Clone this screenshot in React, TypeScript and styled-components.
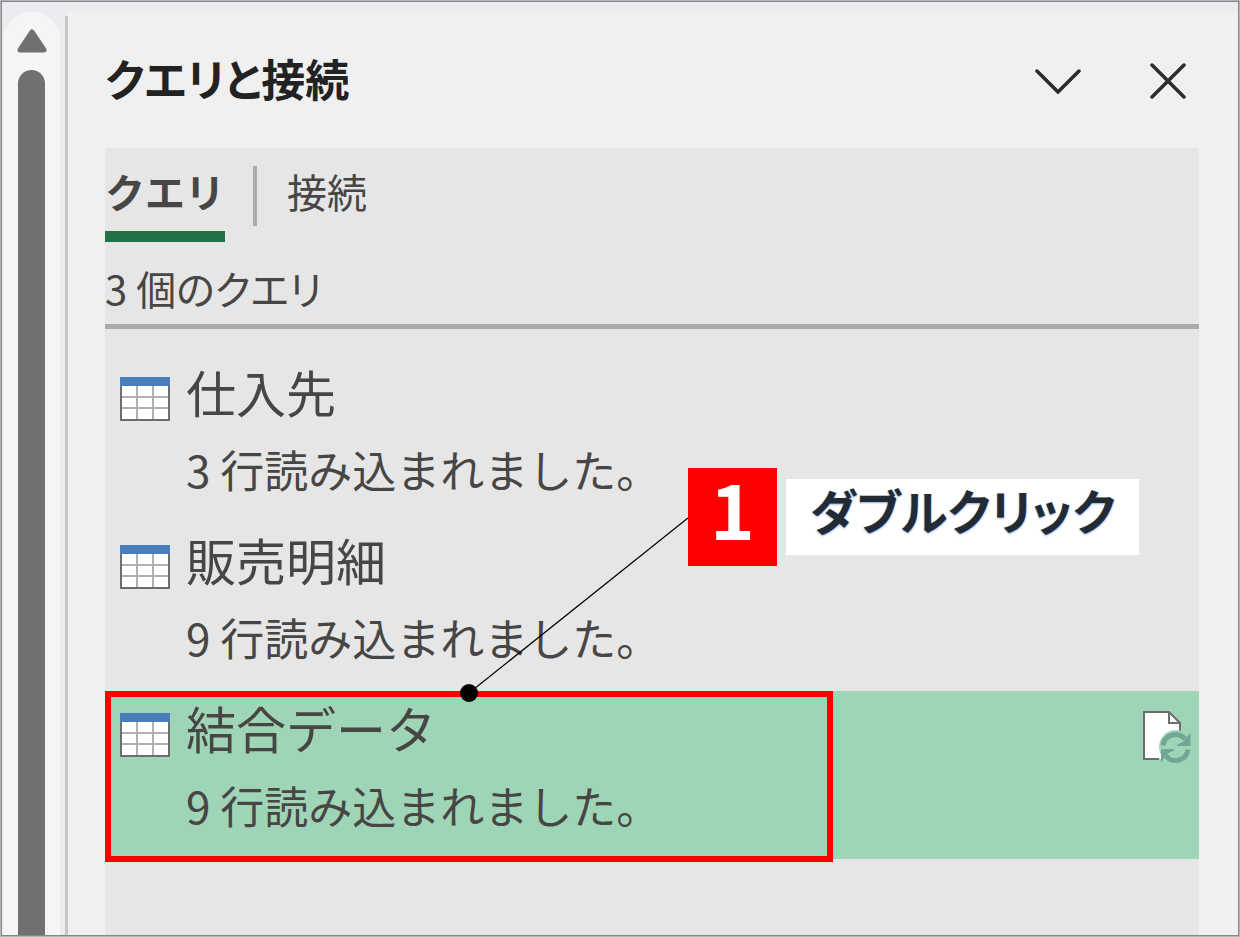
import React from "react";
import styled, { createGlobalStyle } from "styled-components";

const GlobalStyle = createGlobalStyle`
  * { box-sizing: border-box; }
  body {
    margin: 0;
    background: #cfcfcf;
    font-family: "Noto Sans CJK JP", "Noto Sans", sans-serif;
    color: #484644;
  }
  button { font: inherit; color: inherit; background: none; border: 0; padding: 0; cursor: pointer; }
  h1, p, ul { margin: 0; padding: 0; }
  svg { display: block; }
`;

const Frame = styled.div`
  min-height: 100vh;
  display: flex;
  border: 1px solid #b4b6b6;
  padding: 1px;
  background: #868686;
`;

const Window = styled.div`
  flex: 1;
  display: flex;
  padding-top: 10px;
  background: #ebecf0;
`;

const ScrollBar = styled.div`
  width: 57px;
  margin-left: 1px;
  display: flex;
  flex-direction: column;
  align-items: center;
  padding-top: 17px;
  gap: 17px;
  border-radius: 28px 28px 0 0;
  background: #f5f5f5;
`;

const ScrollThumb = styled.div`
  flex: 1;
  width: 27px;
  border-radius: 14px 14px 0 0;
  background: #707070;
`;

const Splitter = styled.div`
  width: 3px;
  margin: 4px 0 0 5px;
  background: #c6c6c6;
`;

const Pane = styled.main`
  flex: 1;
  display: flex;
  flex-direction: column;
  padding: 0 39px 0 37px;
  background: #f0f0f0;
`;

const Header = styled.header`
  height: 136px;
  display: flex;
  align-items: center;
  justify-content: space-between;
`;

const Title = styled.h1`
  padding-bottom: 4px;
  font-size: 44px;
  line-height: 64px;
  font-weight: 700;
  font-feature-settings: "palt";
  color: #222;
`;

const HeaderActions = styled.div`
  display: flex;
  gap: 56px;
  padding: 2px 4px 0 0;
`;

const IconButton = styled.button`
  width: 54px;
  height: 54px;
  display: grid;
  place-items: center;
`;

const Panel = styled.section`
  flex: 1;
  background: #e6e6e6;
`;

const Tabs = styled.div`
  display: flex;
  align-items: flex-start;
  padding-top: 18px;
`;

const Tab = styled.button<{ $active?: boolean }>`
  height: 76px;
  padding-bottom: 16px;
  font-size: 40px;
  line-height: 48px;
  font-weight: ${(p) => (p.$active ? 700 : 400)};
  border-bottom: 11px solid ${(p) => (p.$active ? "#217346" : "transparent")};
`;

const TabDivider = styled.div`
  width: 4px;
  height: 60px;
  margin: 0 30px 0 28px;
  background: #ababab;
`;

const Count = styled.p`
  height: 87px;
  padding-top: 18px;
  font-size: 40px;
  line-height: 56px;
  font-feature-settings: "palt";
  border-bottom: 5px solid #ababab;
`;

const List = styled.ul`
  padding-top: 26px;
  list-style: none;
`;

const Item = styled.li<{ $selected?: boolean }>`
  position: relative;
  height: 168px;
  display: flex;
  justify-content: space-between;
  background: ${(p) => (p.$selected ? "#9fd5b7" : "transparent")};
`;

const ItemButton = styled.button`
  flex: 1;
  display: flex;
  gap: 16px;
  padding: 4px 0 0 15px;
  text-align: left;
`;

const TableIconBox = styled.span`
  padding-top: 18px;
`;

const ItemText = styled.span`
  display: flex;
  flex-direction: column;
  gap: 14px;
`;

const ItemName = styled.span`
  font-size: 50px;
  line-height: 64px;
`;

const ItemStatus = styled.span`
  font-size: 44px;
  line-height: 64px;
`;

const RefreshButton = styled.button`
  align-self: flex-start;
  padding: 19px 8px 0 0;
`;

const Highlight = styled.div`
  position: absolute;
  top: 0;
  left: 0;
  width: 728px;
  height: 171px;
  border: 6px solid #ff0000;
  pointer-events: none;
`;

const Callout = styled.div`
  position: absolute;
  left: 355px;
  bottom: 156px;
  display: flex;
  align-items: flex-start;
  pointer-events: none;
`;

const StepNumber = styled.div`
  width: 89px;
  height: 98px;
  background: #ff0000;
  color: #fff;
  font-size: 76px;
  line-height: 78px;
  font-weight: 700;
  text-align: center;
`;

const StepLabel = styled.div`
  width: 353px;
  height: 76px;
  margin: 11px 0 0 9px;
  background: #fff;
  color: #222b35;
  font-size: 48px;
  line-height: 60px;
  font-weight: 700;
  font-feature-settings: "palt";
  text-align: center;
  text-shadow: 0 1px 2px #8faadc;
  white-space: nowrap;
`;

const Leader = styled.svg`
  margin-top: 48px;
`;

const TableIcon = () => (
  <svg width="50" height="44" viewBox="0 0 50 44" aria-hidden="true">
    <rect x="1" y="1" width="48" height="42" fill="#fff" stroke="#6d6d6d" strokeWidth="2" />
    <path d="M17 9v33M33 9v33M2 20h46M2 31h46" stroke="#b0b0b0" strokeWidth="2" fill="none" />
    <rect width="50" height="9" fill="#4a7ebb" />
  </svg>
);

const RefreshIcon = () => (
  <svg width="48" height="53" viewBox="0 0 48 53" aria-hidden="true">
    <path d="M1 2h25l11 11v36H1z" fill="#fff" />
    <path d="M16 49H1V2h25l11 11v8M26 2v11h11" fill="none" stroke="#6d6d6d" strokeWidth="2" />
    <circle cx="33" cy="37" r="17" fill="#9fd5b7" />
    <g fill="none" stroke="#73a795" strokeWidth="5">
      <path d="M20 35.5A12.5 12.5 0 0 1 42 29" />
      <path d="M45 39.5A12.5 12.5 0 0 1 23 46" />
    </g>
    <path d="M47.5 22.5V36H34v-1.5l5.500-2.500zM18 52.500V39h13v1.500l-5.500 2.500z" fill="#73a795" />
  </svg>
);

const queries = [
  { name: "仕入先", status: "3 行読み込まれました。" },
  { name: "販売明細", status: "9 行読み込まれました。" },
  { name: "結合データ", status: "9 行読み込まれました。", selected: true },
];

export default function App() {
  return (
    <>
      <GlobalStyle />
      <Frame>
        <Window>
          <ScrollBar>
            <button aria-label="上へスクロール">
              <svg width="32" height="24" viewBox="0 0 32 24" aria-hidden="true">
                <path d="M16 3L28 21H4z" fill="#707070" stroke="#707070" strokeWidth="5" strokeLinejoin="round" />
              </svg>
            </button>
            <ScrollThumb />
          </ScrollBar>
          <Splitter />
          <Pane>
            <Header>
              <Title>クエリと接続</Title>
              <HeaderActions>
                <IconButton aria-label="作業ウィンドウのオプション">
                  <svg width="46" height="26" viewBox="0 0 46 26" aria-hidden="true">
                    <path d="M2 3l21 21L44 3" fill="none" stroke="#2b2b2b" strokeWidth="3.5" strokeLinecap="round" />
                  </svg>
                </IconButton>
                <IconButton aria-label="閉じる">
                  <svg width="36" height="36" viewBox="0 0 36 36" aria-hidden="true">
                    <path d="M2 2l32 32M34 2L2 34" fill="none" stroke="#2b2b2b" strokeWidth="3.5" strokeLinecap="round" />
                  </svg>
                </IconButton>
              </HeaderActions>
            </Header>
            <Panel>
              <Tabs role="tablist">
                <Tab role="tab" aria-selected="true" $active>クエリ</Tab>
                <TabDivider />
                <Tab role="tab" aria-selected="false">接続</Tab>
              </Tabs>
              <Count>3 個のクエリ</Count>
              <List>
                {queries.map((q) => (
                  <Item key={q.name} $selected={q.selected}>
                    <ItemButton>
                      <TableIconBox><TableIcon /></TableIconBox>
                      <ItemText>
                        <ItemName>{q.name}</ItemName>
                        <ItemStatus>{q.status}</ItemStatus>
                      </ItemText>
                    </ItemButton>
                    {q.selected && (
                      <>
                        <RefreshButton aria-label="最新の情報に更新"><RefreshIcon /></RefreshButton>
                        <Highlight />
                        <Callout>
                          <Leader width="228" height="187" viewBox="0 0 228 187" aria-hidden="true">
                            <path d="M9 177L228 2" stroke="#000" strokeWidth="1.3" />
                            <circle cx="9" cy="177" r="9" />
                          </Leader>
                          <StepNumber>1</StepNumber>
                          <StepLabel>ダブルクリック</StepLabel>
                        </Callout>
                      </>
                    )}
                  </Item>
                ))}
              </List>
            </Panel>
          </Pane>
        </Window>
      </Frame>
    </>
  );
}
